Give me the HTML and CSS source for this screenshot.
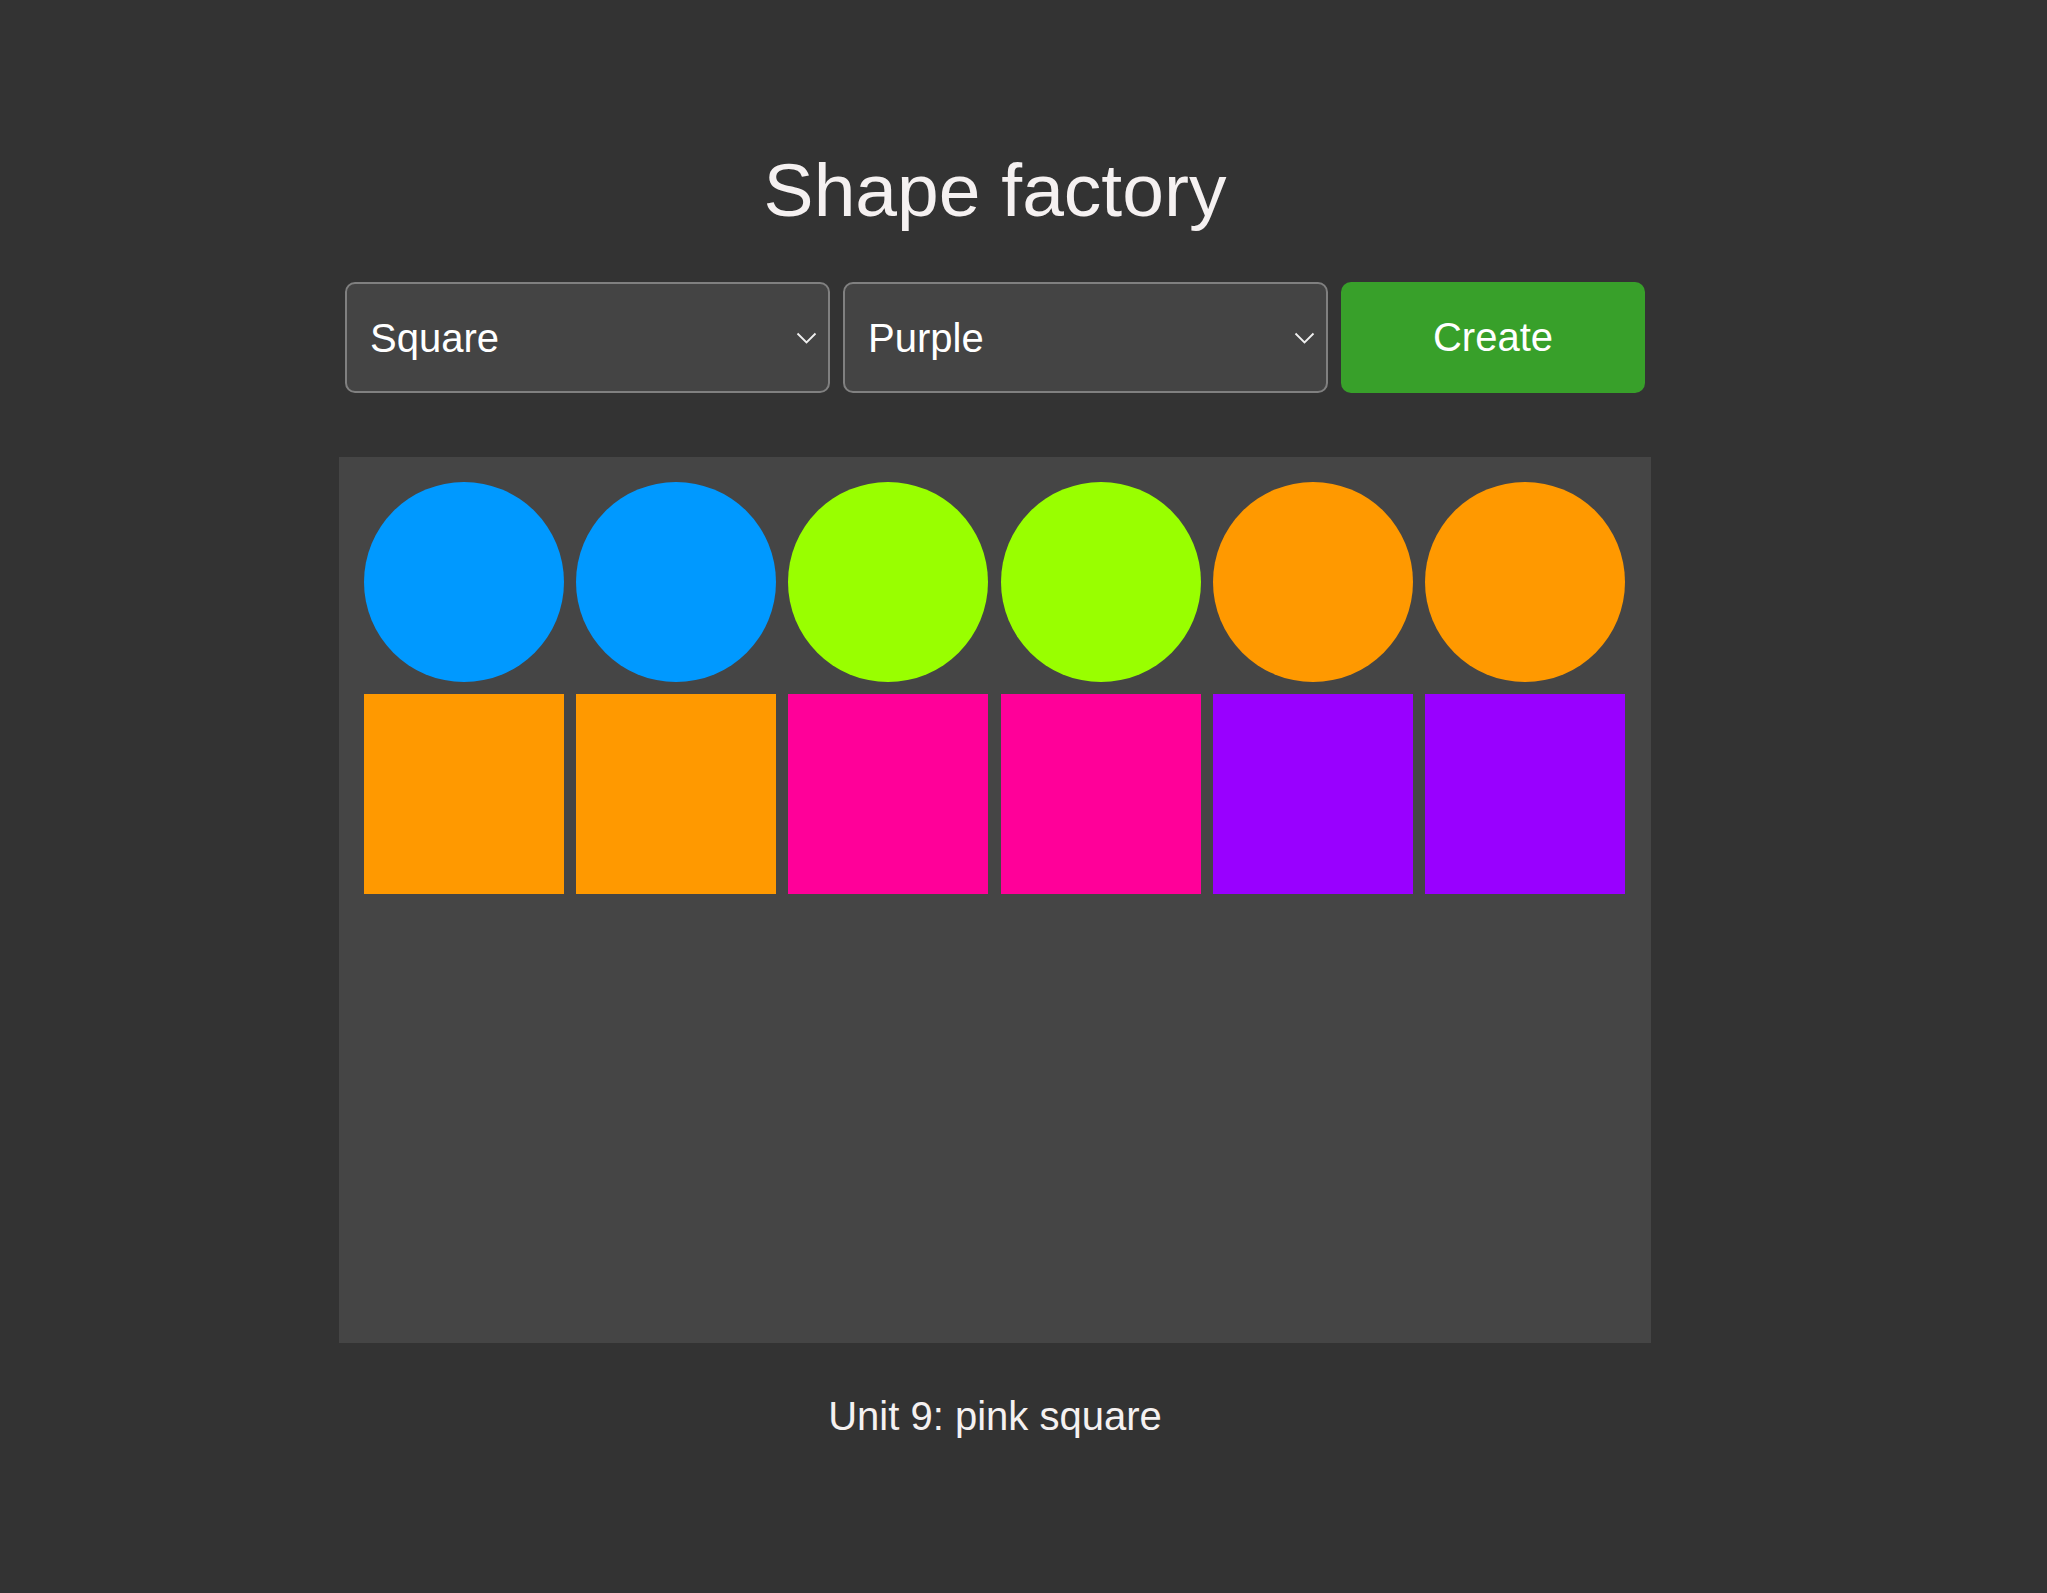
FILE: index.html
```html
<!DOCTYPE html>
<html lang="en">
<head>
<meta charset="utf-8">
<title>Shape factory</title>
<link rel="stylesheet" href="styles.css">
</head>
<body>
<main class="app">
  <h1 class="title">Shape factory</h1>
  <div class="controls">
    <div class="select-wrap">
      <select class="select">
        <option>Square</option>
        <option>Circle</option>
      </select>
      <svg class="chevron" viewBox="0 0 21 12" width="21" height="12"><path d="M1.5 1.5 L10.5 10.5 L19.5 1.5" fill="none" stroke="#f0f0f0" stroke-width="1.8"/></svg>
    </div>
    <div class="select-wrap">
      <select class="select">
        <option>Purple</option>
        <option>Blue</option>
        <option>Green</option>
        <option>Orange</option>
        <option>Pink</option>
      </select>
      <svg class="chevron" viewBox="0 0 21 12" width="21" height="12"><path d="M1.5 1.5 L10.5 10.5 L19.5 1.5" fill="none" stroke="#f0f0f0" stroke-width="1.8"/></svg>
    </div>
    <button class="create">Create</button>
  </div>
  <div class="board">
    <div class="shape circle blue"></div>
    <div class="shape circle blue"></div>
    <div class="shape circle green"></div>
    <div class="shape circle green"></div>
    <div class="shape circle orange"></div>
    <div class="shape circle orange"></div>
    <div class="shape orange"></div>
    <div class="shape orange"></div>
    <div class="shape pink"></div>
    <div class="shape pink"></div>
    <div class="shape purple"></div>
    <div class="shape purple"></div>
  </div>
  <p class="status">Unit 9: pink square</p>
</main>
</body>
</html>
```
FILE: styles.css
```css
html, body {
  margin: 0;
  background: #333333;
}
body {
  padding-right: 57px;
  font-family: "Liberation Sans", Arial, sans-serif;
  color: #f5f1f1;
}
.app {
  width: 1312px;
  margin: 0 auto;
  padding-top: 147px;
  display: flex;
  flex-direction: column;
  align-items: stretch;
}
.title {
  margin: 0;
  font-size: 75px;
  line-height: 86px;
  font-weight: normal;
  text-align: center;
  color: #f5f1f1;
}
.controls {
  margin: 49px 6px 0;
  display: flex;
  gap: 13px;
  height: 111px;
}
.select-wrap {
  position: relative;
  width: 485px;
  height: 111px;
}
.select {
  appearance: none;
  -webkit-appearance: none;
  width: 100%;
  height: 100%;
  box-sizing: border-box;
  background: #444444;
  border: 2px solid #808080;
  border-radius: 10px;
  color: #ffffff;
  font-family: "Liberation Sans", Arial, sans-serif;
  font-size: 40px;
  padding: 0 50px 0 23px;
  outline: none;
}
.chevron {
  position: absolute;
  right: 13px;
  top: 50px;
  pointer-events: none;
}
.create {
  width: 304px;
  height: 111px;
  border: none;
  border-radius: 10px;
  background: #38a02a;
  color: #ffffff;
  font-family: "Liberation Sans", Arial, sans-serif;
  font-size: 40px;
  padding: 0;
}
.board {
  margin-top: 64px;
  height: 886px;
  box-sizing: border-box;
  background: #454545;
  padding: 25px;
  display: flex;
  flex-wrap: wrap;
  align-content: flex-start;
  row-gap: 12px;
  column-gap: 12.2px;
}
.shape {
  width: 200px;
  height: 200px;
}
.circle { border-radius: 50%; }
.blue { background: #0099ff; }
.green { background: #99ff00; }
.orange { background: #ff9900; }
.pink { background: #ff0099; }
.purple { background: #9900ff; }
.status {
  margin: 50px 0 0;
  font-size: 40px;
  line-height: 46px;
  text-align: center;
  color: #f5f1f1;
}
```
